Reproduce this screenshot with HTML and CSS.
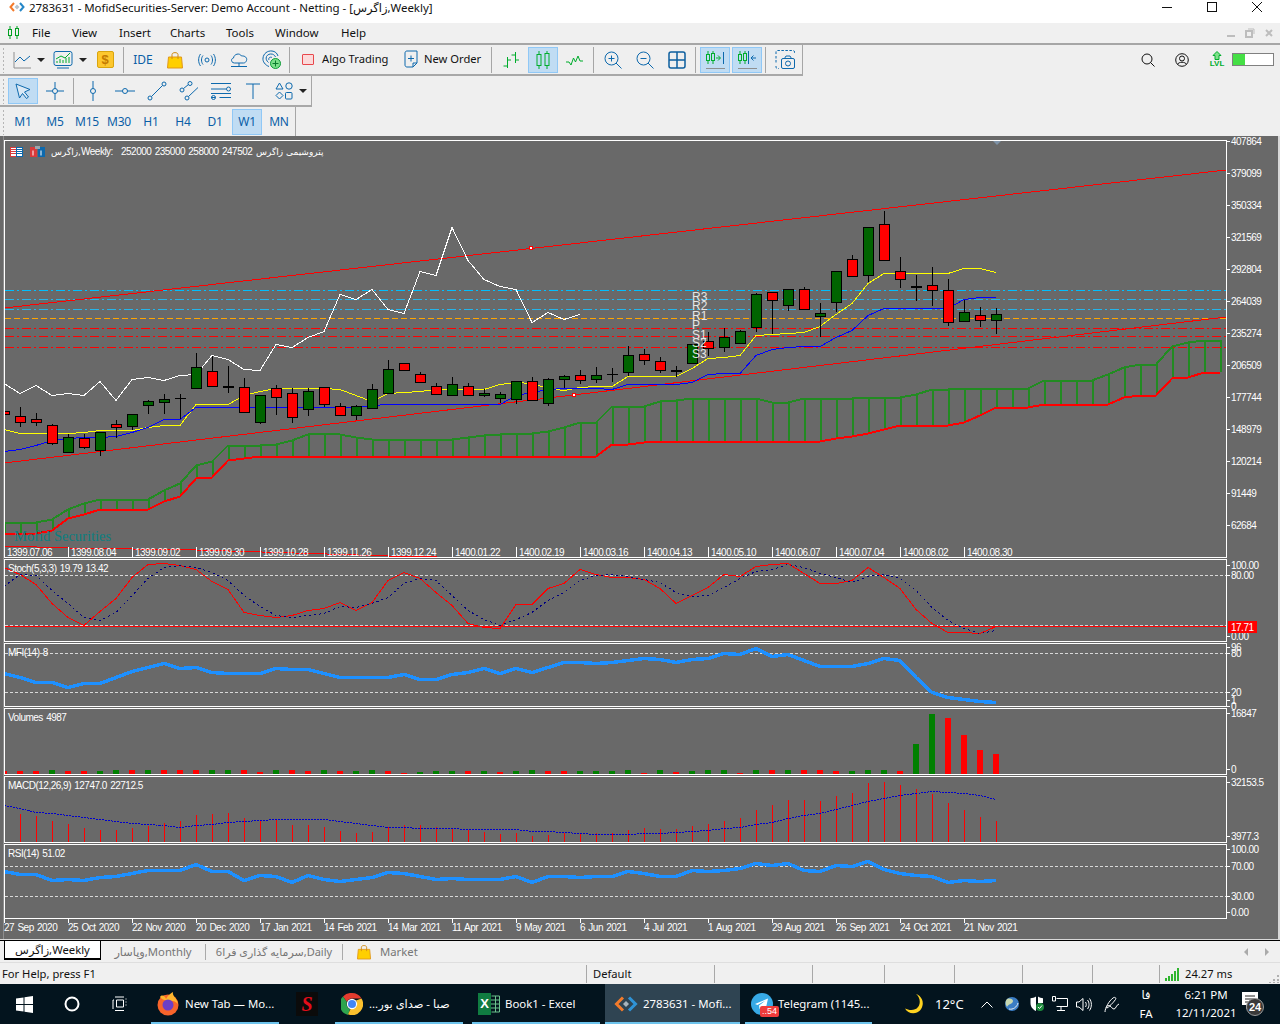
FILE: index.html
```html
<!DOCTYPE html>
<html lang="en">
<head>
<meta charset="utf-8">
<title>MofidSecurities terminal</title>
<link rel="stylesheet" href="styles.css">
</head>
<body>
<div class="app">
  <header class="titlebar">
    <svg class="logo" width="16" height="10" viewBox="0 0 16 10"><path class="lg-o" d="M5 1L1.5 5L5 9"/><path class="lg-b" d="M11 1L14.5 5L11 9"/><path class="lg-g" d="M8 2.5L10.5 5L8 7.5L5.5 5Z"/></svg>
    <span class="title-text">2783631 - MofidSecurities-Server: Demo Account - Netting - [زاگرس,Weekly]</span>
    <div class="winctl">
      <svg width="12" height="12" viewBox="0 0 12 12"><path class="k1" d="M1 6.500H11"/></svg>
      <svg width="12" height="12" viewBox="0 0 12 12"><rect class="k1" x="1.5" y="1.5" width="9" height="9"/></svg>
      <svg width="12" height="12" viewBox="0 0 12 12"><path class="k1" d="M1 1L11 11M11 1L1 11"/></svg>
    </div>
  </header>
  <nav class="menubar">
    <svg class="menu-ico" width="13" height="13" viewBox="0 0 13 13"><path class="g1" d="M3 0V13M10 0V13"/><rect class="g1f" x="1.5" y="3.5" width="3" height="6"/><rect class="g1f" x="8.5" y="2.5" width="3" height="7"/></svg>
    <div class="menu-items"><span>File</span><span>View</span><span>Insert</span><span>Charts</span><span>Tools</span><span>Window</span><span>Help</span></div>
    <div class="mdi">
      <svg width="10" height="10" viewBox="0 0 10 10"><path class="mdi-s" d="M1 8H9"/></svg>
      <svg width="10" height="10" viewBox="0 0 10 10"><rect class="mdi-s" x="1" y="3" width="6" height="6"/><path class="mdi-t" d="M3 1H9V6"/></svg>
      <svg width="10" height="10" viewBox="0 0 10 10"><path class="mdi-s" d="M2 2L8 8M8 2L2 8"/></svg>
    </div>
  </nav>

  <section class="toolbars">
    <div class="tb-line">
      <div class="tb tb-main">
        <i class="grip"></i>
        <div class="btn btn-drop w40">
          <svg width="18" height="18" viewBox="0 0 18 18"><path class="gr1" d="M1 1V17H18"/><path class="bl1" d="M2 11L7 6L11 10L17 5"/></svg><b class="caret"></b>
        </div>
        <div class="btn btn-drop w43">
          <svg width="20" height="20" viewBox="0 0 20 20"><rect class="bl1" x="1" y="1.5" width="18" height="14" rx="2"/><path class="bl1" d="M4 18H16"/><path class="gn1" d="M3 9L8 6L12 8L17 3M4 13V11M7 13V9M10 13V10M13 13V8M16 13V7"/></svg><b class="caret"></b>
        </div>
        <div class="btn">
          <span class="dollar">$</span>
        </div>
        <i class="sep"></i>
        <div class="btn"><span class="ide">IDE</span></div>
        <div class="btn"><svg width="16" height="18" viewBox="0 0 16 18"><path class="bag" d="M1.5 6H14.5L15.5 17H0.5Z"/><path class="bag-h" d="M5 8V3.5C5 1 11 1 11 3.5V8"/></svg></div>
        <div class="btn"><svg width="18" height="14" viewBox="0 0 18 14"><circle class="bl1" cx="9" cy="7" r="2"/><path class="bl1" d="M5 2.5C3 5 3 9 5 11.5M13 2.5C15 5 15 9 13 11.5M2.5 1C0 4.5 0 9.5 2.5 13M15.5 1C18 4.5 18 9.5 15.5 13"/></svg></div>
        <div class="btn"><svg width="18" height="18" viewBox="0 0 18 18"><path class="bl1" d="M4.5 12C1 12 0.5 7.5 3.5 7C4 3 9.5 1.5 11.5 5C15 4.5 17.5 7 16.5 9.5C16 11 15 12 13.5 12Z"/><path class="bl1" d="M9 12V15M1 15.5H17"/></svg></div>
        <div class="btn"><svg width="19" height="19" viewBox="0 0 19 19"><path class="bl1" d="M7 16.5C3 15 0.5 11.5 1 8C1.5 3.5 5.5 0.5 10 1C13 1.3 15 3 16 6"/><path class="bl1" d="M6.5 12.5C4.5 11 3.5 8.500 4.500 6.500C5.500 4.500 8 3.500 10.500 4.200C12 4.700 13 5.700 13.500 7"/><path class="bl1" d="M7 10C6 8 8 6.500 10 7.500"/><circle class="plus-c" cx="13.500" cy="13.500" r="5"/><path class="plus-w" d="M13.500 10.500V16.500M10.500 13.500H16.500"/></svg></div>
        <i class="sep"></i>
        <div class="btn-text w103"><i class="algo"></i><span>Algo Trading</span></div>
        <div class="btn-text w93">
          <svg width="14" height="18" viewBox="0 0 14 18"><path class="bl1" d="M1 3C1 1.800 1.800 1 3 1H13V13L9 17H3C1.800 17 1 16.200 1 15Z"/><path class="bl1" d="M7 5.500V11.500M4 8.500H10M9 17V13H13"/></svg>
          <span>New Order</span>
        </div>
        <i class="sep"></i>
        <div class="btn"><svg width="18" height="18" viewBox="0 0 18 18"><path class="gn1" d="M5.500 6V17M1.500 15H5.500M5.500 9H9M13.500 1V12M9.500 4H13.500M13.500 9H17"/></svg></div>
        <div class="btn on"><svg width="14" height="18" viewBox="0 0 14 18"><path class="gn1" d="M3 0V18M11 0V18"/><rect class="gn1f" x="1" y="3.500" width="4" height="11"/><rect class="gn1f" x="9" y="2.500" width="4" height="12"/></svg></div>
        <div class="btn"><svg width="18" height="12" viewBox="0 0 18 12"><path class="gn1" d="M0 8H3L5 11L7.500 4L9.500 8L12 2L14 7H17"/></svg></div>
        <i class="sep"></i>
        <div class="btn"><svg width="18" height="18" viewBox="0 0 18 18"><circle class="bl1" cx="7.500" cy="7.500" r="6.500"/><path class="bl1" d="M7.500 4.500V10.500M4.500 7.500H10.500M12 12L17.500 17.500"/></svg></div>
        <div class="btn"><svg width="18" height="18" viewBox="0 0 18 18"><circle class="bl1" cx="7.500" cy="7.500" r="6.500"/><path class="bl1" d="M4.500 7.500H10.500M12 12L17.500 17.500"/></svg></div>
        <div class="btn"><svg width="18" height="18" viewBox="0 0 18 18"><rect class="bl2" x="1" y="1" width="16" height="16" rx="2"/><path class="bl2" d="M9 1V17M1 9H17"/></svg></div>
        <i class="sep"></i>
        <div class="btn on"><svg width="20" height="20" viewBox="0 0 20 20"><path class="gn1" d="M3 1V14M8 1V14"/><rect class="gn1f" x="1.500" y="4.500" width="3" height="6"/><rect class="gn1f" x="6.500" y="3.500" width="3" height="7"/><path class="gn1" d="M11 8H15M13 5.500L15.500 8L13 10.500"/><path class="bl1" d="M18.500 2V14"/><path class="gr1" d="M1 18.500H20"/></svg></div>
        <div class="btn on"><svg width="20" height="20" viewBox="0 0 20 20"><path class="gn1" d="M3 1V14M8 1V14"/><rect class="gn1f" x="1.500" y="4.500" width="3" height="6"/><rect class="gn1f" x="6.500" y="3.500" width="3" height="7"/><path class="bl1" d="M11.500 1V14M14 8H19M16.500 5.500L14 8L16.500 10.500"/><path class="gr1" d="M1 18.500H20"/></svg></div>
        <i class="sep"></i>
        <div class="btn"><svg width="20" height="20" viewBox="0 0 20 20"><path class="bl-d" d="M1 4V2C1 1 1.500 0.500 2.500 0.500H18C19 0.500 19.500 1 19.500 2V4M1 6V14M1 16V17C1 18 1.500 18.500 2.500 18.500H4"/><rect class="bl1" x="6.500" y="8.500" width="13" height="10" rx="1.500"/><circle class="bl1" cx="13" cy="13.500" r="2.500"/><path class="bl1" d="M9.500 8.500L11 6H15L16.500 8.500"/></svg></div>
      </div>
      <div class="tb-right">
        <svg class="r-search" width="14" height="14" viewBox="0 0 14 14"><circle class="k1" cx="6" cy="6" r="5"/><path class="k1" d="M9.500 9.500L13.500 13.500"/></svg>
        <svg class="r-user" width="14" height="14" viewBox="0 0 14 14"><circle class="k1" cx="7" cy="7" r="6.300"/><circle class="k1" cx="7" cy="5.500" r="2.500"/><path class="k1" d="M2.500 11.500C3.500 8.500 10.500 8.500 11.500 11.500"/></svg>
        <div class="lvl"><svg width="10" height="9" viewBox="0 0 10 9"><path class="lvl-a" d="M5 0.500L9 4.500H7V8.500H3V4.500H1Z"/></svg><span>LVL</span></div>
        <div class="progress"><i></i></div>
      </div>
    </div>
    <div class="tb tb-draw">
      <i class="grip"></i>
      <div class="btn on"><svg width="16" height="16" viewBox="0 0 16 16"><path class="cur" d="M1 1L15 6.500L9.500 9L13.500 14L11.500 15.500L7.500 10.500L4.500 15Z"/></svg></div>
      <div class="btn"><svg width="18" height="18" viewBox="0 0 18 18"><circle class="bl1" cx="9" cy="9" r="2.500"/><path class="bl1" d="M9 0V6.500M9 11.500V18M0 9H6.500M11.500 9H18"/></svg></div>
      <i class="sep"></i>
      <div class="btn"><svg width="6" height="20" viewBox="0 0 6 20"><circle class="bl1" cx="3" cy="10" r="2.500"/><path class="bl1" d="M3 0V7.500M3 12.500V20"/></svg></div>
      <div class="btn"><svg width="20" height="6" viewBox="0 0 20 6"><circle class="bl1" cx="10" cy="3" r="2.500"/><path class="bl1" d="M0 3H7.500M12.500 3H20"/></svg></div>
      <div class="btn"><svg width="20" height="20" viewBox="0 0 20 20"><circle class="bl1" cx="3" cy="17" r="2"/><circle class="bl1" cx="17" cy="3" r="2"/><path class="bl1" d="M4.500 15.500L15.500 4.500"/></svg></div>
      <div class="btn"><svg width="20" height="20" viewBox="0 0 20 20"><circle class="bl1" cx="3" cy="9" r="2"/><circle class="bl1" cx="11" cy="2.500" r="2"/><circle class="bl1" cx="8" cy="17" r="2"/><path class="bl1" d="M4.500 7.500L9.500 3.500M9.500 15.500L19 6.500"/></svg></div>
      <div class="btn"><svg width="20" height="18" viewBox="0 0 20 18"><path class="bl1" d="M0 1.500H20M0 7H15M0 15.500H4.500M8.500 15.500H20"/><circle class="bl1" cx="17.500" cy="7" r="2"/><circle class="bl1" cx="2.500" cy="15.500" r="2"/><path class="bl1" d="M0 11.500H20"/></svg></div>
      <div class="btn"><svg width="14" height="16" viewBox="0 0 14 16"><path class="bl1" d="M0 1H14M7 1V16"/></svg></div>
      <div class="btn btn-drop w42">
        <svg width="18" height="18" viewBox="0 0 18 18"><path class="bl1" d="M4.500 1L8 7H1Z"/><circle class="bl1" cx="14" cy="4" r="3.200"/><path class="bl1" d="M4.500 10L8 13.500L4.500 17L1 13.500Z"/><rect class="bl1" x="10.500" y="10.500" width="6.500" height="6.500" rx="1"/></svg><b class="caret caret-k"></b>
      </div>
    </div>
    <div class="tb tb-periods">
      <i class="grip"></i>
      <div class="btn per">M1</div><div class="btn per">M5</div><div class="btn per">M15</div><div class="btn per">M30</div><div class="btn per">H1</div><div class="btn per">H4</div><div class="btn per">D1</div><div class="btn per on">W1</div><div class="btn per">MN</div>
    </div>
  </section>

  <svg id="chart" class="chart" width="1280" height="804" viewBox="0 136 1280 804"></svg>

  <div class="tabs">
    <div class="tab tab-on">زاگرس,Weekly</div>
    <div class="tab tab-2">وپاسار,Monthly</div>
    <div class="tab tab-3">سرمایه گذاری فرا6,Daily</div>
    <div class="tab tab-4"><svg width="14" height="16" viewBox="0 0 16 18"><path class="bag" d="M1.500 6H14.500L15.500 17H0.500Z"/><path class="bag-h" d="M5 8V3.500C5 1 11 1 11 3.500V8"/></svg><span>Market</span></div>
    <div class="tab-nav"><i class="nav-l"></i><i class="nav-r"></i></div>
  </div>

  <div class="status">
    <div class="cell c-help">For Help, press F1</div>
    <div class="cell c-def">Default</div>
    <div class="cell c98"></div>
    <div class="cell c72"></div>
    <div class="cell c70"></div>
    <div class="cell c68"></div>
    <div class="cell c70"></div>
    <div class="cell c67"></div>
    <div class="cell c-net">
      <svg width="15" height="14" viewBox="0 0 15 14"><path class="net-b" d="M1 14V11M4 14V9M7 14V7M10 14V4M13 14V1"/></svg>
      <span>24.27 ms</span>
      <svg class="corner" width="10" height="10" viewBox="0 0 10 10"><path class="corner-d" d="M8 2H10V4H8ZM4 6H6V8H4ZM8 6H10V8H8ZM0 9H2V10H0ZM4 9H6V10H4ZM8 9H10V10H8Z"/></svg>
    </div>
  </div>

  <footer class="taskbar">
    <div class="tk w48"><svg width="17" height="17" viewBox="0 0 17 17"><path class="wf" d="M0 2.500L7.500 1.400V8H0ZM8.500 1.300L17 0V8H8.500ZM0 9H7.500V15.600L0 14.500ZM8.500 9H17V17L8.500 15.700Z"/></svg></div>
    <div class="tk w48"><svg width="16" height="16" viewBox="0 0 16 16"><circle class="ws2" cx="8" cy="8" r="6.500"/></svg></div>
    <div class="tk w48"><svg width="16" height="16" viewBox="0 0 16 16"><path class="ws1" d="M3 1H12M4.500 4H11.500V11H4.500ZM1 11V4H2M14 2.500V3.500M14 5.500V6.500M14 8.500V9.500M3 14.500H12M1 13V11"/></svg></div>
    <div class="task t-ff">
      <svg width="22" height="24" viewBox="0 0 22 24"><circle class="ff-o" cx="11" cy="13" r="10.500"/><path class="ff-y" d="M3 5C5 2 8 4 9 7C11 3 14 1 16 0C15 4 20 6 21 12C19 9 14 8 11 9C7 8 4 7 3 5Z"/><circle class="ff-p" cx="11" cy="13" r="5.500"/></svg>
      <span>New Tab — Mo...</span>
    </div>
    <div class="tk t-s"><span class="sq-s">S</span></div>
    <div class="task t-ch">
      <svg width="22" height="22" viewBox="0 0 22 22"><path class="ch-r" d="M11 0A11 11 0 0 1 20.500 5.500H11A5.500 5.500 0 0 0 5.900 9L2 3.500A11 11 0 0 1 11 0Z"/><path class="ch-g" d="M2 3.500L5.900 9A5.500 5.500 0 0 0 9 16L7 22A11 11 0 0 1 2 3.500Z"/><path class="ch-y" d="M20.500 5.500A11 11 0 0 1 7 21.300L9.500 16A5.500 5.500 0 0 0 15 7.500Z"/><circle class="ch-w" cx="11" cy="11" r="5.200"/><circle class="ch-b" cx="11" cy="11" r="4"/></svg>
      <span dir="rtl">صبا - صدای بور...</span>
    </div>
    <div class="task t-xl">
      <span class="xl"><b>X</b><svg width="9" height="18" viewBox="0 0 9 18"><path class="xl-l" d="M0.500 1H8.500V17H0.500M0 5H8.500M0 9H8.500M0 13H8.500M4.500 1V17"/></svg></span>
      <span>Book1 - Excel</span>
    </div>
    <div class="task t-mf">
      <svg width="24" height="16" viewBox="0 0 24 16"><path class="mf-o" d="M9 1.500L2.500 8L9 14.500"/><path class="mf-b" d="M15 1.500L21.500 8L15 14.500"/><path class="mf-g" d="M12 5L15 8L12 11L9 8Z"/></svg>
      <span>2783631 - Mofi...</span>
    </div>
    <div class="task t-tg">
      <span class="tg-wrap">
        <svg width="22" height="22" viewBox="0 0 22 22"><circle class="tg-c" cx="11" cy="11" r="11"/><path class="tg-p" d="M4 11L17 5.500L14.500 17L10.500 14L8.500 16L8 12.500L14.500 7.500L6.500 12Z"/></svg>
        <em class="tg-badge">..54</em>
      </span>
      <span>Telegram (1145...</span>
    </div>
    <div class="moon"><svg width="18" height="20" viewBox="0 0 18 20"><path class="moon-p" d="M11 0C15 3 16 9 13 13C10 17 4 16.500 0 14.500C2 18.500 7.500 20.500 12 18.500C17 16.500 19 10 17 5.500C16 3 13.500 0.500 11 0Z"/></svg></div>
    <div class="temp">12°C</div>
    <div class="tray t-chev"><svg width="12" height="7" viewBox="0 0 12 7"><path class="ws1" d="M0.500 6.500L6 1L11.500 6.500"/></svg></div>
    <div class="tray t-glob"><svg width="14" height="16" viewBox="0 0 14 16"><circle class="gl-b" cx="7" cy="8" r="7"/><path class="gl-g" d="M2 3C5 2 8 3 8 5C8 8 3 8 2 11C0 8 0 5 2 3Z"/><path class="gl-w" d="M4 13C8 14 12 11 13 7"/></svg></div>
    <div class="tray t-shd"><svg width="14" height="16" viewBox="0 0 14 16"><path class="wf" d="M6 0.500C4.500 1.500 2.500 2.200 0.500 2.200V7C0.500 11 3 13.500 6 15ZM8 0.500C9.500 1.500 11.500 2.200 13 2.200V7H8Z"/><circle class="sh-g" cx="10" cy="11" r="4"/><path class="ws1" d="M8 11L9.500 12.500L12 9.500"/></svg></div>
    <div class="tray t-net"><svg width="16" height="16" viewBox="0 0 16 16"><path class="ws1" d="M4.500 2.500H15.500V10.500H4.500M9 10.500V14M5 14.500H13M0.500 0.500H3.500V5H0.500Z"/></svg></div>
    <div class="tray t-vol"><svg width="16" height="15" viewBox="0 0 16 15"><path class="ws1" d="M0.500 5H3L7 1.500V13.500L3 10H0.500ZM9.500 5C10.500 6.500 10.500 8.500 9.500 10M11.500 3C13.500 5.500 13.500 9.500 11.500 12M13.500 1.500C16 5 16 10 13.500 13.500"/></svg></div>
    <div class="tray t-pen"><svg width="17" height="17" viewBox="0 0 17 17"><path class="ws1" d="M1 16C1 12 5 5 9 2C11 0.500 12.500 2 11.500 3.500C9 7 5 11 3 12C1.500 12.500 3 8 6 10C8 11 8 13 10 13C12 13 12 9 15 8"/></svg></div>
    <div class="lang"><span>فا</span><span>FA</span></div>
    <div class="clock"><span>6:21 PM</span><span>12/11/2021</span></div>
    <div class="notif"><svg width="16" height="17" viewBox="0 0 16 17"><path class="wf" d="M0 0H16V13H8L4 17V13H0Z"/><path class="nt-l" d="M3 4H13M3 7H13M3 10H10"/></svg><em class="nt-badge">24</em></div>
  </footer>
</div>
<script src="chart.js"></script>
</body>
</html>
```
FILE: styles.css
```css
* { box-sizing: border-box; }
html, body { margin: 0; padding: 0; background: #f0f0f0; }
body { width: 1280px; height: 1024px; overflow: hidden; font: 11.300px/16px "Noto Sans", "DejaVu Sans", sans-serif; color: #111; }
.app { display: flex; flex-direction: column; width: 1280px; height: 1024px; }
svg { display: block; fill: none; }
i, em, b { font-style: normal; font-weight: normal; }

.titlebar { display: flex; align-items: flex-start; height: 23px; background: #fff; flex: none; }
.logo { margin: 2px 0 0 9px; }
.title-text { margin-left: 4px; font-size: 11.500px; letter-spacing: -0.050px; white-space: nowrap; color: #111; }
.winctl { margin-left: auto; margin-top: 1px; display: grid; grid-template-columns: 12px 12px 12px; column-gap: 33px; padding-right: 17px; }
.k1 { stroke: #111; stroke-width: 1; fill: none; }
.lg-o { stroke: #f47a2a; stroke-width: 2; }
.lg-b { stroke: #2587c8; stroke-width: 2; }
.lg-g { fill: #b9c3cb; }

.menubar { display: flex; align-items: center; height: 20px; background: #f0f0f0; flex: none; padding-bottom: 1px; }
.menu-ico { margin-left: 7px; }
.menu-items { display: grid; grid-template-columns: 40px 47px 51px 56px 49px 66px auto; margin-left: 12px; font-size: 11.500px; }
.g1 { stroke: #00a020; }
.g1f { stroke: #00a020; fill: #f0f0f0; }
.mdi { margin-left: auto; display: grid; grid-template-columns: 10px 10px 10px; column-gap: 9px; padding-right: 6px; }
.mdi-s { stroke: #bdbdbd; stroke-width: 2; fill: none; }
.mdi-t { stroke: #bdbdbd; fill: none; }

.toolbars { flex: none; height: 93px; border-top: 2px solid #a6a6a6; background: #efefef; }
.tb-line { display: flex; height: 31px; }
.tb { display: flex; align-items: center; }
.tb-main { width: 803px; height: 31px; border-right: 1px solid #a6a6a6; border-bottom: 2px solid #a8a8a8; }
.tb-draw { width: 312px; height: 31px; border-right: 1px solid #a6a6a6; border-bottom: 2px solid #a8a8a8; }
.tb-periods { width: 296px; height: 29px; border-right: 1px solid #a6a6a6; }
.grip { flex: none; width: 6px; height: 26px; }
.tb-draw .grip, .tb-periods .grip { width: 7px; }
.tb-main .grip, .tb-draw .grip, .tb-periods .grip { background: radial-gradient(circle at 3.500px 2px, #b5b5b5 1px, transparent 1px) 0 0 / 6px 4px; }
.btn { flex: none; display: flex; align-items: center; justify-content: center; width: 30px; height: 26px; margin: 0 1px; border: 1px solid transparent; }
.on { background: #c0dcf3; border-color: #90c8f6; }
.btn-drop { justify-content: flex-start; padding-left: 6px; gap: 6px; margin: 0; }
.w40 { width: 40px; }
.w43 { width: 43px; padding-left: 6px; }
.w42 { width: 42px; padding-left: 5px; }
.caret { width: 0; height: 0; border: 4px solid transparent; border-top: 4px solid #222; border-bottom: 0; }
.sep { flex: none; width: 6px; height: 26px; padding-left: 0; background: linear-gradient(#a6a6a6, #a6a6a6) 2px 0 / 1px 100% no-repeat; }
.dollar { display: block; width: 17px; height: 17px; line-height: 15px; text-align: center; border: 1px solid #d9a50e; border-radius: 2px; background: #fdc72e; color: #c47a00; font: bold 13px/15px "Liberation Sans", sans-serif; }
.ide { color: #0a5ea6; font-size: 12px; }
.bl1 { stroke: #0d69ad; stroke-width: 1; fill: none; }
.bl2 { stroke: #0d5f9e; stroke-width: 1.500; fill: none; }
.bl-d { stroke: #0d69ad; stroke-width: 1; stroke-dasharray: 2.500 1.500; fill: none; }
.gr1 { stroke: #8f8f8f; stroke-width: 1; fill: none; }
.gn1 { stroke: #00ad2d; stroke-width: 1; fill: none; }
.gn1f { stroke: #00ad2d; fill: #c0dcf3; }
.bag { fill: #ffcf00; stroke: #e0971a; }
.bag-h { stroke: #cf8a12; fill: none; }
.plus-c { fill: #7be08a; stroke: #0a9a36; }
.plus-w { stroke: #0a7a2c; }
.btn-text { flex: none; display: flex; align-items: center; gap: 8px; height: 26px; padding-bottom: 1px; font-size: 11.200px; }
.w103 { width: 103px; padding-left: 9px; }
.w93 { width: 93px; padding-left: 8px; gap: 6px; }
.algo { display: block; width: 12px; height: 11px; background: #fbdada; border: 1px solid #e8474c; border-radius: 1px; }
.tb-right { display: flex; align-items: center; margin-left: auto; height: 29px; }
.r-search { margin-right: 20px; }
.r-user { margin-right: 21px; }
.lvl { display: flex; flex-direction: column; align-items: center; width: 14px; margin-right: 8px; }
.lvl span { font: bold 8px/8px "Liberation Sans", sans-serif; color: #00ad2d; }
.lvl-a { fill: #7fe08a; stroke: #00ad2d; }
.progress { width: 42px; height: 13px; margin-right: 6px; border: 1px solid #808080; background: #fff; }
.progress i { display: block; width: 12px; height: 11px; background: #45df45; }
.cur { fill: #dbe9f5; stroke: #0d69ad; }
.per { color: #0a5ea6; font-size: 12px; letter-spacing: -0.200px; }
.tb-periods .per { height: 26px; }

.chart { flex: none; background: #696969; }
.c-frame { fill: none; stroke: #fff; }
.c-tick { stroke: #fff; fill: none; }
.c-txt { fill: #fff; font: 10px "Liberation Sans", "DejaVu Sans", sans-serif; letter-spacing: -0.500px; word-spacing: 1px; }
.c-ar { fill: #fff; font: 9px "DejaVu Sans", sans-serif; letter-spacing: -0.300px; }
.c-pp { fill: #e6e6e6; font: 12px "Liberation Sans", sans-serif; }
.c-wm { fill: #0b7f80; font: 14.500px "Liberation Serif", serif; }
.c-wick { stroke: #000; }
.c-g { fill: #006400; stroke: #000; }
.c-r { fill: #f00; stroke: #000; }
.c-doji { stroke: #000; stroke-width: 2; }
.c-l { fill: none; shape-rendering: crispEdges; }
.l-white { stroke: #fff; }
.l-yel { stroke: #ff0; }
.l-blue { stroke: #00f; }
.l-red { stroke: #f00; }
.l-cyan { stroke: #00bfff; stroke-dasharray: 9 3 2 3; }
.l-cyan2 { stroke: #25b5ea; stroke-dasharray: 9 3 2 3; }
.l-org { stroke: #ffa500; stroke-dasharray: 6 3; }
.l-dd { stroke: #f00; stroke-dasharray: 9 3 2 3; }
.l-cloud { stroke: #228b22; stroke-width: 2; }
.l-cloudv { stroke: #228b22; stroke-width: 2; }
.l-base { stroke: #f00; stroke-width: 2; }
.l-lvl { stroke: #d8d8d8; stroke-dasharray: 3 2; }
.l-sig { stroke: #000080; stroke-dasharray: 2 3; }
.l-dblue { stroke: #0000cd; stroke-dasharray: 2 1; }
.l-thick { stroke: #1e90ff; stroke-width: 3.500; }
.m-sq { fill: #fff; stroke: #f00; }
.v-g { fill: #008000; }
.v-r { fill: #f00; }
.c-redbox { fill: #f00; }
.c-dia { fill: #7f93a8; }
.edge-l { fill: #8e8e8e; }
.edge-r { fill: #d8d8d8; }
.ic-r { fill: #fff; stroke: #d83b3b; }
.ic-b { fill: #fff; stroke: #0d69ad; }
.ic-rf { fill: #d83b3b; }
.ic-bf { fill: #0d69ad; }
.ic-gf { fill: #9aa5ad; }

.tabs { display: flex; align-items: center; height: 22px; flex: none; background: #f0f0f0; border-top: 1px solid #000; font-size: 11.300px; }
.tab { display: flex; align-items: center; justify-content: center; height: 19px; color: #767676; white-space: nowrap; }
.tab-on { width: 97px; margin-left: 4px; align-self: flex-start; color: #111; background: #fff; border: 1px solid #000; border-top: 0; border-bottom-width: 2px; }
.tab-2 { width: 105px; border-right: 1px solid #aaa; height: 16px; }
.tab-3 { width: 137px; border-right: 1px solid #aaa; height: 16px; font-size: 11px; }
.tab-4 { gap: 9px; margin-left: 14px; }
.tab-nav { display: flex; gap: 17px; margin-left: auto; padding-right: 11px; }
.nav-l { border: 4px solid transparent; border-right: 4px solid #aaa; border-left: 0; }
.nav-r { border: 4px solid transparent; border-left: 4px solid #aaa; border-right: 0; }

.status { display: flex; align-items: stretch; height: 22px; flex: none; background: #f0f0f0; border-top: 1px solid #dedede; padding-top: 2px; font-size: 11.200px; }
.cell { height: 18px; border-right: 1px solid #a8a8a8; display: flex; align-items: center; }
.c-help { width: 587px; padding-left: 2px; }
.c-def { width: 128px; padding-left: 6px; }
.c98 { width: 98px; }
.c72 { width: 72px; }
.c70 { width: 70px; }
.c68 { width: 68px; }
.c67 { width: 67px; }
.c-net { flex: 1; border: 0; padding-left: 5px; gap: 5px; position: relative; }
.net-b { stroke: #2fb52f; stroke-width: 2; }
.corner { position: absolute; right: 1px; bottom: 0; }
.corner-d { fill: #b0b0b0; }

.taskbar { display: flex; align-items: center; height: 40px; flex: none; background: #03141e; color: #fff; font-size: 11.400px; white-space: nowrap; }
.tk { display: flex; align-items: center; justify-content: center; height: 40px; }
.w48 { width: 48px; flex: none; }
.task { display: flex; align-items: center; gap: 6px; height: 40px; padding-top: 2px; border-bottom: 2px solid #6dc3ec; flex: none; }
.t-ff { width: 128px; margin-left: 7px; padding-left: 6px; }
.t-s { width: 22px; margin-left: 17px; }
.sq-s { display: block; width: 22px; height: 24px; background: #0b0b0b; color: #e30d1a; text-align: center; font: bold italic 20px/24px "Liberation Serif", serif; }
.t-ch { width: 128px; margin-left: 17px; padding-left: 6px; }
.t-xl { width: 128px; margin-left: 9px; padding-left: 6px; gap: 5px; }
.t-mf { width: 135px; margin-left: 5px; padding-left: 9px; background: #2f4452; gap: 5px; }
.t-tg { width: 127px; margin-left: 5px; padding-left: 6px; gap: 5px; }
.wf { fill: #fff; }
.ws1 { stroke: #fff; fill: none; stroke-width: 1; }
.ws2 { stroke: #fff; fill: none; stroke-width: 2; }
.ff-o { fill: #f7642b; }
.ff-y { fill: #ffb52e; }
.ff-p { fill: #6c3fc7; }
.ch-r { fill: #e33b2e; }
.ch-g { fill: #2ea44f; }
.ch-y { fill: #fbc02d; }
.ch-w { fill: #fff; }
.ch-b { fill: #4285f4; }
.xl { display: flex; align-items: center; width: 22px; height: 22px; }
.xl b { display: block; width: 13px; height: 22px; background: #107c41; color: #fff; text-align: center; font: bold 13px/22px "Liberation Sans", sans-serif; }
.xl-l { stroke: #6cc28e; }
.mf-o { stroke: #f27b2b; stroke-width: 3; }
.mf-b { stroke: #2f93d6; stroke-width: 3; }
.mf-g { fill: #a8b4bc; }
.tg-wrap { position: relative; display: block; width: 22px; height: 22px; }
.tg-c { fill: #37a9e6; }
.tg-p { fill: #fff; }
.tg-badge { position: absolute; left: 9px; top: 13px; padding: 0 2px; height: 11px; background: #ef3b3b; border-radius: 2px; color: #fff; font: 9px/11px "Liberation Sans", sans-serif; }
.moon { margin-left: 33px; width: 18px; flex: none; }
.moon-p { fill: #ffd21f; }
.temp { margin-left: 12px; width: 30px; font-size: 13px; flex: none; }
.tray { flex: none; display: flex; align-items: center; justify-content: center; }
.t-chev { margin-left: 16px; width: 12px; }
.t-glob { margin-left: 12px; width: 14px; }
.t-shd { margin-left: 11px; width: 14px; }
.t-net { margin-left: 8px; width: 16px; }
.t-vol { margin-left: 8px; width: 16px; }
.t-pen { margin-left: 12px; width: 17px; }
.gl-b { fill: #3b7dc4; }
.gl-g { fill: #c8d8b0; }
.gl-w { stroke: #e8eef2; fill: none; }
.sh-g { fill: #1d8a3d; }
.lang { display: flex; flex-direction: column; align-items: center; margin-left: 18px; width: 14px; flex: none; line-height: 19px; font-size: 11.500px; }
.clock { display: flex; flex-direction: column; align-items: center; margin-left: 20px; width: 66px; flex: none; line-height: 18px; font-size: 11.500px; }
.notif { position: relative; margin-left: 2px; padding-left: 1px; width: 24px; height: 24px; flex: none; }
.nt-l { stroke: #222; }
.nt-badge { position: absolute; left: 5px; top: 6px; width: 18px; height: 18px; border-radius: 50%; background: #3a3a3a; border: 1px solid #9a9a9a; text-align: center; font: bold 11px/16px "Liberation Sans", sans-serif; }
```
FILE: chart.js
```js
(function () {
  var svg = document.getElementById('chart');
  var out = [];
  function X(k) { return 4 + 16 * k; }
  function rep(v, n) { var a = []; for (var i = 0; i < n; i++) a.push(v); return a; }
  function line(y1, x1, x2, cls) { out.push('<line class="c-l ' + cls + '" x1="' + x1 + '" x2="' + x2 + '" y1="' + y1 + '" y2="' + y1 + '"/>'); }
  function seg(x1, y1, x2, y2, cls) { out.push('<line class="' + cls + '" x1="' + x1 + '" y1="' + y1 + '" x2="' + x2 + '" y2="' + y2 + '"/>'); }
  function poly(ys, cls, base, start) {
    var pts = ys.map(function (v, i) {
      var y = base === undefined ? v : base + v / 3;
      return X((start || 0) + i) + ',' + (Math.round(y) + 0.5);
    });
    out.push('<polyline class="c-l ' + cls + '" points="' + pts.join(' ') + '"/>');
  }
  function text(x, y, s, cls) { out.push('<text class="' + (cls || 'c-txt') + '" x="' + x + '" y="' + y + '">' + s + '</text>'); }

  out.push('<defs><clipPath id="plot"><rect x="5" y="141" width="1221" height="777"/></clipPath></defs>');
  out.push('<rect class="edge-l" x="3" y="136" width="1" height="803"/>');
  out.push('<rect class="edge-r" x="1278" y="136" width="2" height="804"/>');
  out.push('<rect class="edge-r" x="0" y="939" width="1280" height="1"/>');
  out.push('<g clip-path="url(#plot)">');

  // Ichimoku cloud
  var top = [523,522,522,519,509,503,499,499,499,499,490,483,465,461,445,445,445,444,440,434,433,434,437,439,439,439,439,439,439,437,435,434,433,433,431,427,422,422,406,406,406,401,400,398,398,398,398,398,402,402,398,398,398,398,397,397,397,394,389,389,388,388,388,388,388,380,380,380,380,374,367,364,364,346,342,340,340];
  var bot = [533,533,533,530,518,514,509,509,509,509,501,496,478,477,460,458].concat(rep(456, 22), [444,444,442], rep(441, 11), [438,436,433,429,425,425,425,425,422,415,407,407,407,404,404,404,404,404,397,395,395,378,377,372,372]);
  top.forEach(function (t, k) { seg(X(k) + 1, t, X(k) + 1, bot[k], 'c-l l-cloudv'); });
  poly(top, 'l-cloud');
  poly(bot, 'l-base');

  // Pivot levels
  line(290.5, 5, 1226, 'l-cyan');
  line(299.5, 5, 1226, 'l-cyan2');
  line(309.5, 5, 1226, 'l-cyan2');
  line(318.5, 5, 1226, 'l-org');
  line(328.5, 5, 1226, 'l-dd');
  line(336.5, 5, 1226, 'l-dd');
  line(347.5, 5, 1226, 'l-dd');

  // Channel
  seg(4, 308, 1226, 170, 'c-l l-red');
  seg(4, 463, 1226, 317, 'c-l l-red');
  out.push('<polyline class="c-l l-red" points="5,546 69,548 196,550 327,554 388,556 437,556"/>');

  // Chikou, Tenkan and Kijun
  poly([383,393,385,395,393,395,381,400,379,377,380,375,374,355,359,369,370,344,347,337,331,294,299,289,309,313,271,275,227,260,279,286,289,322,312,319,314], 'l-white');
  poly([429,433,433,433,433,432,430,430,430,427,425,425,404,404,404,395,391,388,388,388,388,389,395,401,393,392,391,389,389,389,389,384,382,383,388,390,387,386,386,376,376,376,376,368,358,357,355,335,334,333,332,326,314,303,283,273,273,273,273,273,268,268,272], 'l-yel');
  poly([451,449,445,440,438,437,437,436,432,427,419,419].concat(rep(407, 11), [405], rep(404, 8), [395,392,389,388,388,388,389,384,384,384,384,382,374,373,373,355,349,347,346,346,337,330,315,308,308,308,308,308,299,297,297]), 'l-blue');

  // Candles: type, body top, body bottom, high, low
  var C = [
    ['r',411,414,411,414],['r',416,422,407,427],['r',419,422,413,426],['r',425,443,424,445],['g',437,452,434,453],['r',438,447,434,449],['g',432,450,432,456],['r',424,427,420,438],
    ['g',414,426,414,430],['g',401,405,400,414],['g',399,402,394,414],['x',398,398,394,419],['g',367,388,353,388],['r',371,386,356,387],['d',387,387,366,393],['r',387,412,378,412],
    ['g',395,422,395,424],['r',388,397,385,415],['r',393,417,388,423],['g',391,409,388,416],['r',387,404,387,407],['r',406,415,403,415],['g',406,415,405,420],['g',389,408,384,408],
    ['g',369,393,360,393],['r',363,370,363,370],['r',374,382,372,382],['r',386,394,383,394],['g',384,395,377,395],['r',386,395,383,395],['g',393,395,389,397],['g',394,398,392,403],
    ['g',381,399,381,404],['r',381,400,377,401],['g',379,403,378,406],['g',376,379,375,388],['r',375,380,370,384],['g',375,379,367,383],['x',374,374,368,382],['g',355,372,346,376],
    ['r',354,360,349,365],['r',361,370,357,373],['d',371,371,366,377],['g',344,363,344,363],['r',341,348,332,356],['g',337,347,328,352],['g',331,343,330,343],['g',294,327,293,332],
    ['r',292,300,292,334],['g',289,305,289,311],['r',289,309,287,309],['g',313,316,303,337],['g',271,302,271,312],['r',259,276,255,277],['g',227,275,227,282],['r',224,260,211,260],
    ['r',271,279,257,288],['d',287,287,275,301],['r',285,290,267,306],['r',290,322,279,326],['g',312,321,300,321],['r',315,320,307,327],['g',314,320,308,334]
  ];
  C.forEach(function (c, k) {
    var x = X(k);
    out.push('<line class="c-wick" shape-rendering="crispEdges" x1="' + (x + 0.5) + '" x2="' + (x + 0.5) + '" y1="' + c[3] + '" y2="' + c[4] + '"/>');
    if (c[0] === 'd') out.push('<line class="c-doji" shape-rendering="crispEdges" x1="' + (x - 5) + '" x2="' + (x + 6) + '" y1="' + c[1] + '" y2="' + c[1] + '"/>');
    else if (c[0] === 'x') out.push('<line class="c-wick" shape-rendering="crispEdges" x1="' + (x - 5) + '" x2="' + (x + 6) + '" y1="' + (c[1] + 0.5) + '" y2="' + (c[1] + 0.5) + '"/>');
    else out.push('<rect class="c-' + c[0] + '" shape-rendering="crispEdges" x="' + (x - 4.5) + '" y="' + (c[1] + 0.5) + '" width="10" height="' + (c[2] - c[1]) + '"/>');
  });

  // Channel anchor points
  out.push('<rect class="m-sq" x="529.5" y="246.5" width="3" height="3"/>');
  out.push('<rect class="m-sq" x="572.5" y="393.5" width="3" height="3"/>');

  // Pivot names
  [['R3',301],['R2',310],['R1',320],['P',329],['S1',339],['S2',347],['S3',358]].forEach(function (p) { text(692, p[1], p[0], 'c-pp'); });

  // Stochastic
  line(625.5, 5, 1226, 'l-lvl');
  line(575.5, 5, 1226, 'l-lvl');
  line(626.5, 5, 1226, 'l-red');
  poly([382,402,432,490,530,555,512,475,410,372,368,375,388,423,447,515,524,532,524,511,503,485,510,485,420,397,414,455,495,548,560,565,493,493,445,430,388,403,411,410,418,445,490,465,440,403,407,377,373,368,400,430,430,420,380,410,443,507,550,577,577,580,558], 'l-red', 440);
  poly([438,402,405,450,490,530,540,515,465,415,382,374,380,395,420,465,497,525,530,525,518,498,500,490,470,430,415,420,465,510,537,555,537,515,480,455,420,405,402,408,418,425,455,468,465,440,415,393,388,373,380,400,412,427,407,403,415,450,500,540,565,578,570], 'l-sig', 440);

  // MFI
  line(653.5, 5, 1226, 'l-lvl');
  line(692.5, 5, 1226, 'l-lvl');
  poly([700,712,727,727,742,730,730,712,692,680,670,685,680,695,700,700,700,685,688,688,698,712,712,712,712,703,718,718,702,697,685,700,683,697,682,667,667,670,667,660,653,658,665,656,654,640,643,625,647,643,660,677,677,677,668,655,660,710,757,772,778,782,785], 'l-thick', 440);

  // Volumes
  var V = 'r213 r213 r213 g210 r213 r213 g213 g210 r210 g210 r210 r210 r210 g210 g210 r210 r216 g210 r210 r213 g210 r213 g213 g210 r213 r219 g216 g213 g213 r213 g213 r216 g213 g210 r213 r213 g213 g213 g213 g210 r219 g210 r216 g213 g210 g210 r219 g210 r210 g210 r210 r210 r213 g213 g210 g210 r213 g132 g42 r54 r105 r150 r162'.split(' ');
  V.forEach(function (v, k) {
    var y = Math.round(700 + (+v.slice(1)) / 3);
    out.push('<rect class="v-' + v[0] + '" x="' + (X(k) - 3) + '" y="' + y + '" width="6" height="' + (774 - y) + '"/>');
  });

  // MACD
  var H = [342,348,363,372,384,390,390,384,378,370,363,345,342,338,353,360,358,375,375,381,393,399,396,380,375,375,381,384,390,396,402,399,408,405,400,400,400,400,390,384,387,387,378,372,363,354,330,315,300,300,303,288,279,249,246,255,267,282,309,330,351,363];
  H.forEach(function (t, i) {
    var x = X(i + 1) + 0.5;
    seg(x, Math.round(700 + t / 3), x, 842, 'c-l l-red');
  });
  poly([316,325,335,340,345,352,356,363,368,373,374,380,376,372,367,364,360,358,358,358,358,363,370,374,380,380,385,385,385,388,388,388,388,392,394,397,400,401,403,403,400,400,397,393,390,384,380,373,365,355,346,340,327,314,303,295,285,278,273,276,279,285,296], 'l-dblue', 700);

  // RSI
  line(866.5, 5, 1226, 'l-lvl');
  line(896.5, 5, 1226, 'l-lvl');
  poly([514,522,522,540,538,541,532,528,518,511,511,511,493,514,514,540,525,528,545,525,538,544,538,530,517,519,528,538,533,538,538,538,529,545,529,529,532,529,529,513,520,528,528,510,514,510,505,490,495,490,510,514,495,497,483,508,518,525,528,547,541,544,541], 'l-thick', 700);
  out.push('</g>');

  // Pane frames
  [[140,557],[559,641],[643,706],[708,774],[776,842],[844,918]].forEach(function (p) {
    out.push('<rect class="c-frame" x="4.5" y="' + (p[0] + 0.5) + '" width="1222" height="' + (p[1] - p[0]) + '"/>');
  });

  // Price axis
  function axis(y, s) {
    seg(1227, y + 0.5, 1230, y + 0.5, 'c-tick');
    text(1231, y + 4, s);
  }
  [[141,'407864'],[173,'379099'],[205,'350334'],[237,'321569'],[269,'292804'],[301,'264039'],[333,'235274'],[365,'206509'],[397,'177744'],[429,'148979'],[461,'120214'],[493,'91449'],[525,'62684'],
   [565,'100.00'],[575,'80.00'],[636,'0.00'],[647,'96'],[653,'80'],[692,'20'],[700,'1'],[706,'0'],[713,'16847'],[769,'0'],[782,'32153.5'],[836,'3977.3'],[849,'100.00'],[866,'70.00'],[896,'30.00'],[912,'0.00']].forEach(function (a) { axis(a[0], a[1]); });
  out.push('<rect class="c-redbox" x="1228" y="621" width="29" height="12"/>');
  text(1231, 631, '17.71');

  // Date axes
  var sh = ['1399.07.06','1399.08.04','1399.09.02','1399.09.30','1399.10.28','1399.11.26','1399.12.24','1400.01.22','1400.02.19','1400.03.16','1400.04.13','1400.05.10','1400.06.07','1400.07.04','1400.08.02','1400.08.30'];
  var gr = ['27 Sep 2020','25 Oct 2020','22 Nov 2020','20 Dec 2020','17 Jan 2021','14 Feb 2021','14 Mar 2021','11 Apr 2021','9 May 2021','6 Jun 2021','4 Jul 2021','1 Aug 2021','29 Aug 2021','26 Sep 2021','24 Oct 2021','21 Nov 2021'];
  sh.forEach(function (s, i) {
    var x = 4 + 64 * i;
    seg(x + 0.5, 547, x + 0.5, 557, 'c-tick');
    text(x + 3, 556, s);
  });
  gr.forEach(function (s, i) {
    var x = 4 + 64 * i;
    seg(x + 0.5, 919, x + 0.5, 923, 'c-tick');
    text(x, 931, s);
  });

  // Labels
  text(14, 541, 'Mofid Securities', 'c-wm');
  text(8, 572, 'Stoch(5,3,3) 19.79 13.42');
  text(8, 656, 'MFI(14) 8');
  text(8, 721, 'Volumes 4987');
  text(8, 789, 'MACD(12,26,9) 12747.0 22712.5');
  text(8, 857, 'RSI(14) 51.02');
  text(51, 155, 'زاگرس,', 'c-ar');
  text(81, 155, 'Weekly:');
  text(121, 155, '252000 235000 258000 247502');
  text(256, 155, 'پتروشیمی زاگرس', 'c-ar');

  // One click trading icons
  out.push('<rect class="ic-r" x="10.5" y="147.5" width="6" height="9"/><rect class="ic-rf" x="11" y="149" width="5" height="1"/><rect class="ic-rf" x="11" y="151" width="5" height="1"/><rect class="ic-rf" x="11" y="153" width="5" height="1"/>');
  out.push('<rect class="ic-b" x="16.5" y="147.500" width="6" height="9"/><rect class="ic-bf" x="17" y="149" width="5" height="1"/><rect class="ic-bf" x="17" y="151" width="5" height="1"/><rect class="ic-bf" x="17" y="153" width="5" height="1"/>');
  out.push('<rect class="ic-rf" x="30" y="147" width="7" height="10"/><rect class="ic-bf" x="38" y="147" width="7" height="10"/><rect class="ic-gf" x="35" y="146" width="5" height="3"/><rect class="ic-r" x="32" y="150" width="2" height="6"/><rect class="ic-b" x="40" y="150" width="2" height="6"/>');
  out.push('<polygon class="c-dia" points="993,141 1001,141 997,145"/>');

  svg.innerHTML = out.join('');
})();
```
